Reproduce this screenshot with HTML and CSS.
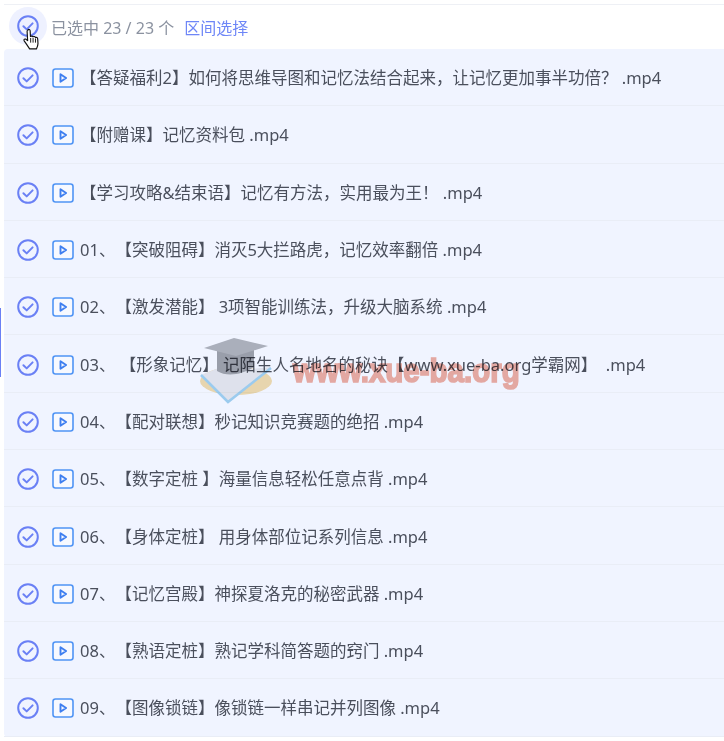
FILE: index.html
```html
<!DOCTYPE html>
<html lang="zh-CN">
<head>
  <meta charset="UTF-8" />
  <title>文件列表</title>
  <link rel="stylesheet" href="styles.css">
</head>
<body>
  <svg class="defs" width="0" height="0">
    <symbol id="check" viewBox="0 0 22 22">
      <circle cx="11" cy="11" r="9.8" fill="none" stroke="#6a80f5" stroke-width="2"/>
      <path d="M6.4 11.200l3.300 3.200 5.900-6" fill="none" stroke="#6a80f5" stroke-width="2" stroke-linecap="round" stroke-linejoin="round"/>
    </symbol>
    <symbol id="video" viewBox="0 0 22 20">
      <rect x="1" y="1" width="20" height="18" rx="2.500" fill="#f7f9ff" stroke="#4f94f5" stroke-width="1.600"/>
      <path d="M8.500 6.300l5.600 3.700-5.600 3.700z" fill="none" stroke="#3f7ff0" stroke-width="1.900" stroke-linejoin="round"/>
    </symbol>
  </svg>

  <div class="side-mark"></div>

  <div class="toolbar">
    <span class="check-all">
      <svg class="check-icon"><use href="#check"/></svg>
    </span>
    <span class="count">已选中 23 / 23 个</span>
    <a class="range">区间选择</a>
    <svg class="cursor" viewBox="0 0 16 22" width="17" height="23">
      <path d="M4.600 1.600c.9-.7 2-.2 2.100 1l.3 5.500c1-.6 2-.4 2.400.3 1-.5 2-.2 2.400.6 1-.3 2 .3 2.100 1.400l.3 4.400c0 2-.6 3.300-1.500 5.200H6.200L2.700 14.700 1 12.300c-.6-1 .2-2.100 1.300-1.700l2 1.500-.5-9c0-.4.3-.8.8-1z" fill="#fff" stroke="#111" stroke-width="1.100" stroke-linejoin="round"/>
      <path d="M7.200 9.500v4.500M9.500 9.500v4.500M11.800 10v4" fill="none" stroke="#111" stroke-width="0.900"/>
    </svg>
  </div>

  <ul class="file-list">
    <li class="file-row"><svg class="check-icon"><use href="#check"/></svg><svg class="video-icon"><use href="#video"/></svg><span class="file-name">【答疑福利2】如何将思维导图和记忆法结合起来，让记忆更加事半功倍？ .mp4</span></li>
    <li class="file-row"><svg class="check-icon"><use href="#check"/></svg><svg class="video-icon"><use href="#video"/></svg><span class="file-name">【附赠课】记忆资料包 .mp4</span></li>
    <li class="file-row"><svg class="check-icon"><use href="#check"/></svg><svg class="video-icon"><use href="#video"/></svg><span class="file-name">【学习攻略&amp;结束语】记忆有方法，实用最为王！ .mp4</span></li>
    <li class="file-row"><svg class="check-icon"><use href="#check"/></svg><svg class="video-icon"><use href="#video"/></svg><span class="file-name">01、【突破阻碍】消灭5大拦路虎，记忆效率翻倍 .mp4</span></li>
    <li class="file-row"><svg class="check-icon"><use href="#check"/></svg><svg class="video-icon"><use href="#video"/></svg><span class="file-name">02、【激发潜能】 3项智能训练法，升级大脑系统 .mp4</span></li>
    <li class="file-row"><svg class="check-icon"><use href="#check"/></svg><svg class="video-icon"><use href="#video"/></svg><span class="file-name">03、 【形象记忆】 记陌生人名地名的秘诀【www.xue-ba.org学霸网】&nbsp; .mp4</span></li>
    <li class="file-row"><svg class="check-icon"><use href="#check"/></svg><svg class="video-icon"><use href="#video"/></svg><span class="file-name">04、【配对联想】秒记知识竞赛题的绝招 .mp4</span></li>
    <li class="file-row"><svg class="check-icon"><use href="#check"/></svg><svg class="video-icon"><use href="#video"/></svg><span class="file-name">05、【数字定桩 】海量信息轻松任意点背 .mp4</span></li>
    <li class="file-row"><svg class="check-icon"><use href="#check"/></svg><svg class="video-icon"><use href="#video"/></svg><span class="file-name">06、【身体定桩】 用身体部位记系列信息 .mp4</span></li>
    <li class="file-row"><svg class="check-icon"><use href="#check"/></svg><svg class="video-icon"><use href="#video"/></svg><span class="file-name">07、【记忆宫殿】神探夏洛克的秘密武器 .mp4</span></li>
    <li class="file-row"><svg class="check-icon"><use href="#check"/></svg><svg class="video-icon"><use href="#video"/></svg><span class="file-name">08、【熟语定桩】熟记学科简答题的窍门 .mp4</span></li>
    <li class="file-row"><svg class="check-icon"><use href="#check"/></svg><svg class="video-icon"><use href="#video"/></svg><span class="file-name">09、【图像锁链】像锁链一样串记并列图像 .mp4</span></li>
  </ul>

  <div class="watermark">
    <svg class="hat" viewBox="0 0 74 68" width="74" height="68">
      <ellipse cx="37" cy="44" rx="36" ry="14" fill="#f6dfae"/>
      <path d="M2 38l20-8 30 2 20-2-43 35z" fill="#ececec"/>
      <path d="M2 38l27 27 43-34" fill="none" stroke="#a5d4ee" stroke-width="2.500"/>
      <path d="M18 12v22c10 6 24 4 37-4V12z" fill="#a3a5aa"/>
      <path d="M5 11L35 1l34 8-32 10z" fill="#b5b7bb"/>
    </svg>
    <span class="mark-text">www.xue-ba.org</span>
  </div>
</body>
</html>
```

FILE: styles.css
```css
* {
  box-sizing: border-box;
}
body {
  margin: 0;
  height: 741px;
  overflow: hidden;
  position: relative;
  background: #fff;
  font-family: "Noto Sans", "Noto Sans CJK SC", sans-serif;
  font-size: 16.5px;
  color: #4a4f5c;
  text-spacing-trim: space-all;
}
.defs {
  position: absolute;
}
.side-mark {
  position: absolute;
  left: 0;
  top: 308px;
  width: 1px;
  height: 69px;
  background: #6a80f5;
}
.toolbar {
  display: flex;
  align-items: center;
  height: 45px;
  margin: 4px 0 0 4px;
  padding: 0 0 2px 5px;
  border-top: 1px solid #eef0f5;
  position: relative;
}
.check-all {
  display: flex;
  align-items: center;
  justify-content: center;
  width: 38px;
  height: 38px;
  border-radius: 50%;
  background: #eef1ff;
  flex-shrink: 0;
}
.check-icon {
  width: 22px;
  height: 22px;
  flex-shrink: 0;
}
.count {
  margin: 2px 0 0 4px;
  font-size: 16px;
  color: #8b92a0;
}
.range {
  margin: 2px 0 0 10px;
  font-size: 16px;
  color: #6e86f7;
}
.cursor {
  position: absolute;
  left: 19px;
  top: 23px;
}
.file-list {
  list-style: none;
  margin: 0 0 0 4px;
  padding: 0;
  background: #f0f4ff;
  border-radius: 4px 0 0 4px;
}
.file-row {
  display: flex;
  align-items: center;
  height: 57.3px;
  padding-left: 13px;
  border-bottom: 1px solid #e9edf6;
}
.file-row .check-icon,
.video-icon {
  margin-top: 2px;
}
.video-icon {
  width: 22px;
  height: 20px;
  margin-left: 13px;
  flex-shrink: 0;
}
.file-name {
  margin-left: 6px;
  white-space: nowrap;
}
.watermark {
  position: absolute;
  left: 199px;
  top: 337px;
  display: flex;
  align-items: center;
  pointer-events: none;
  mix-blend-mode: multiply;
}
.mark-text {
  margin: -2px 0 0 20px;
  font-family: "Liberation Sans", sans-serif;
  font-weight: 700;
  font-size: 29.5px;
  color: #f2b0a2;
  -webkit-text-stroke: 1.5px #f2b0a2;
  white-space: nowrap;
  transform: scaleY(1.15);
  filter: blur(0.6px);
}
```
